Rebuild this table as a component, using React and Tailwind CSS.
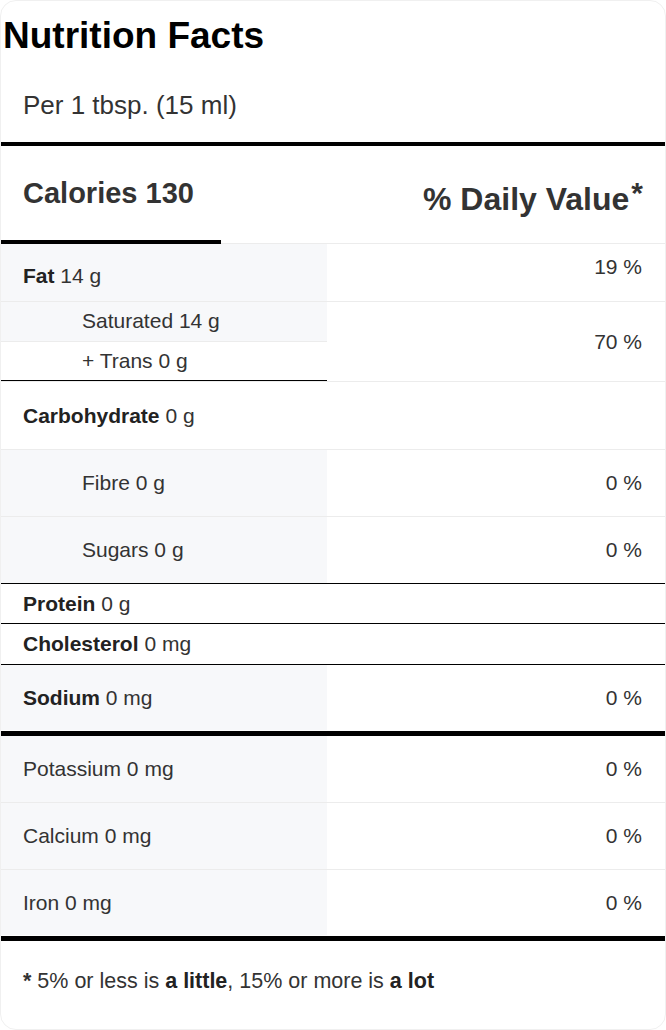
const font = { fontFamily: '"Liberation Sans", Arial, Helvetica, sans-serif' }

const Row = ({ children, h, gray, right, border = 'border-[#ececec]', align = 'items-center' }) => (
  <div className={`flex border-b ${border} ${h}`}>
    <div className={`w-[326px] flex items-center pl-[22px] ${gray ? 'bg-[#f7f8fa]' : ''}`}>{children}</div>
    <div className={`flex-1 flex justify-end pr-[23px] ${align}`}>{right}</div>
  </div>
)

const Label = ({ bold, value, indent }) => (
  <span className={`text-[21px] leading-6 text-[#333] ${indent ? 'pl-[59px]' : ''}`}>
    {bold && <b className="font-bold text-[#222]">{bold} </b>}
    {value}
  </span>
)

const Pct = ({ v }) => <span className="text-[21px] leading-6 text-[#333]">{v} %</span>

export default function App() {
  return (
    <div className="min-h-[1030px] bg-white" style={font}>
      <div className="h-[1030px] rounded-2xl border border-[#f0f0f0] bg-white overflow-hidden flex flex-col">
        <h1 className="pl-[2px] pt-[13px] text-[37px] leading-[43px] font-bold text-black">Nutrition Facts</h1>
        <p className="pl-[22px] pt-[33px] pb-[22px] text-[26px] leading-[30px] text-[#333]">Per 1 tbsp. (15 ml)</p>
        <div className="h-[4px] bg-black" />

        {/* Calories header */}
        <div className="flex justify-between items-start px-[22px] pt-[30px] h-[94px]">
          <span className="text-[29px] leading-[34px] font-bold text-[#333]">Calories 130</span>
          <span className="pt-[5px] text-[32px] leading-[36px] font-bold text-[#333]">
            % Daily Value<span className="text-[30px] leading-none align-top relative -top-[3px] ml-[2px]">*</span>
          </span>
        </div>
        <div className="flex items-end">
          <div className="w-[220px] h-[4px] bg-black" />
          <div className="flex-1 border-b border-[#ececec]" />
        </div>

        <Row h="h-[58px]" gray align="items-start pt-[11px]" right={<Pct v="19" />}>
          <span className="pt-[8px]"><Label bold="Fat" value="14 g" /></span>
        </Row>

        <div className="flex border-b border-[#ececec] h-[80px]">
          <div className="w-[326px] flex flex-col">
            <div className="h-[40px] flex items-center pl-[22px] bg-[#f7f8fa] border-b border-[#ececec]">
              <Label value="Saturated 14 g" indent />
            </div>
            <div className="h-[40px] flex items-center pl-[22px] border-b border-black">
              <Label value="+ Trans 0 g" indent />
            </div>
          </div>
          <div className="flex-1 flex items-center justify-end pr-[23px]">
            <Pct v="70" />
          </div>
        </div>

        <Row h="h-[68px]">
          <Label bold="Carbohydrate" value="0 g" />
        </Row>
        <Row h="h-[67px]" gray right={<Pct v="0" />}>
          <Label value="Fibre 0 g" indent />
        </Row>
        <Row h="h-[67px]" gray border="border-black" right={<Pct v="0" />}>
          <Label value="Sugars 0 g" indent />
        </Row>
        <Row h="h-[40px]" border="border-black">
          <Label bold="Protein" value="0 g" />
        </Row>
        <Row h="h-[41px]" border="border-black">
          <Label bold="Cholesterol" value="0 mg" />
        </Row>
        <Row h="h-[66px]" gray border="border-transparent" right={<Pct v="0" />}>
          <Label bold="Sodium" value="0 mg" />
        </Row>
        <div className="h-[5px] bg-black" />

        <Row h="h-[67px]" gray right={<Pct v="0" />}>
          <Label value="Potassium 0 mg" />
        </Row>
        <Row h="h-[67px]" gray right={<Pct v="0" />}>
          <Label value="Calcium 0 mg" />
        </Row>
        <Row h="h-[66px]" gray border="border-transparent" right={<Pct v="0" />}>
          <Label value="Iron 0 mg" />
        </Row>
        <div className="h-[5px] bg-black" />

        <p className="pl-[22px] pt-[28px] text-[21.5px] leading-6 text-[#333]">
          <b className="font-bold">*</b> 5% or less is <b className="font-bold text-[#222]">a little</b>, 15% or more is <b className="font-bold text-[#222]">a lot</b>
        </p>
      </div>
    </div>
  )
}
